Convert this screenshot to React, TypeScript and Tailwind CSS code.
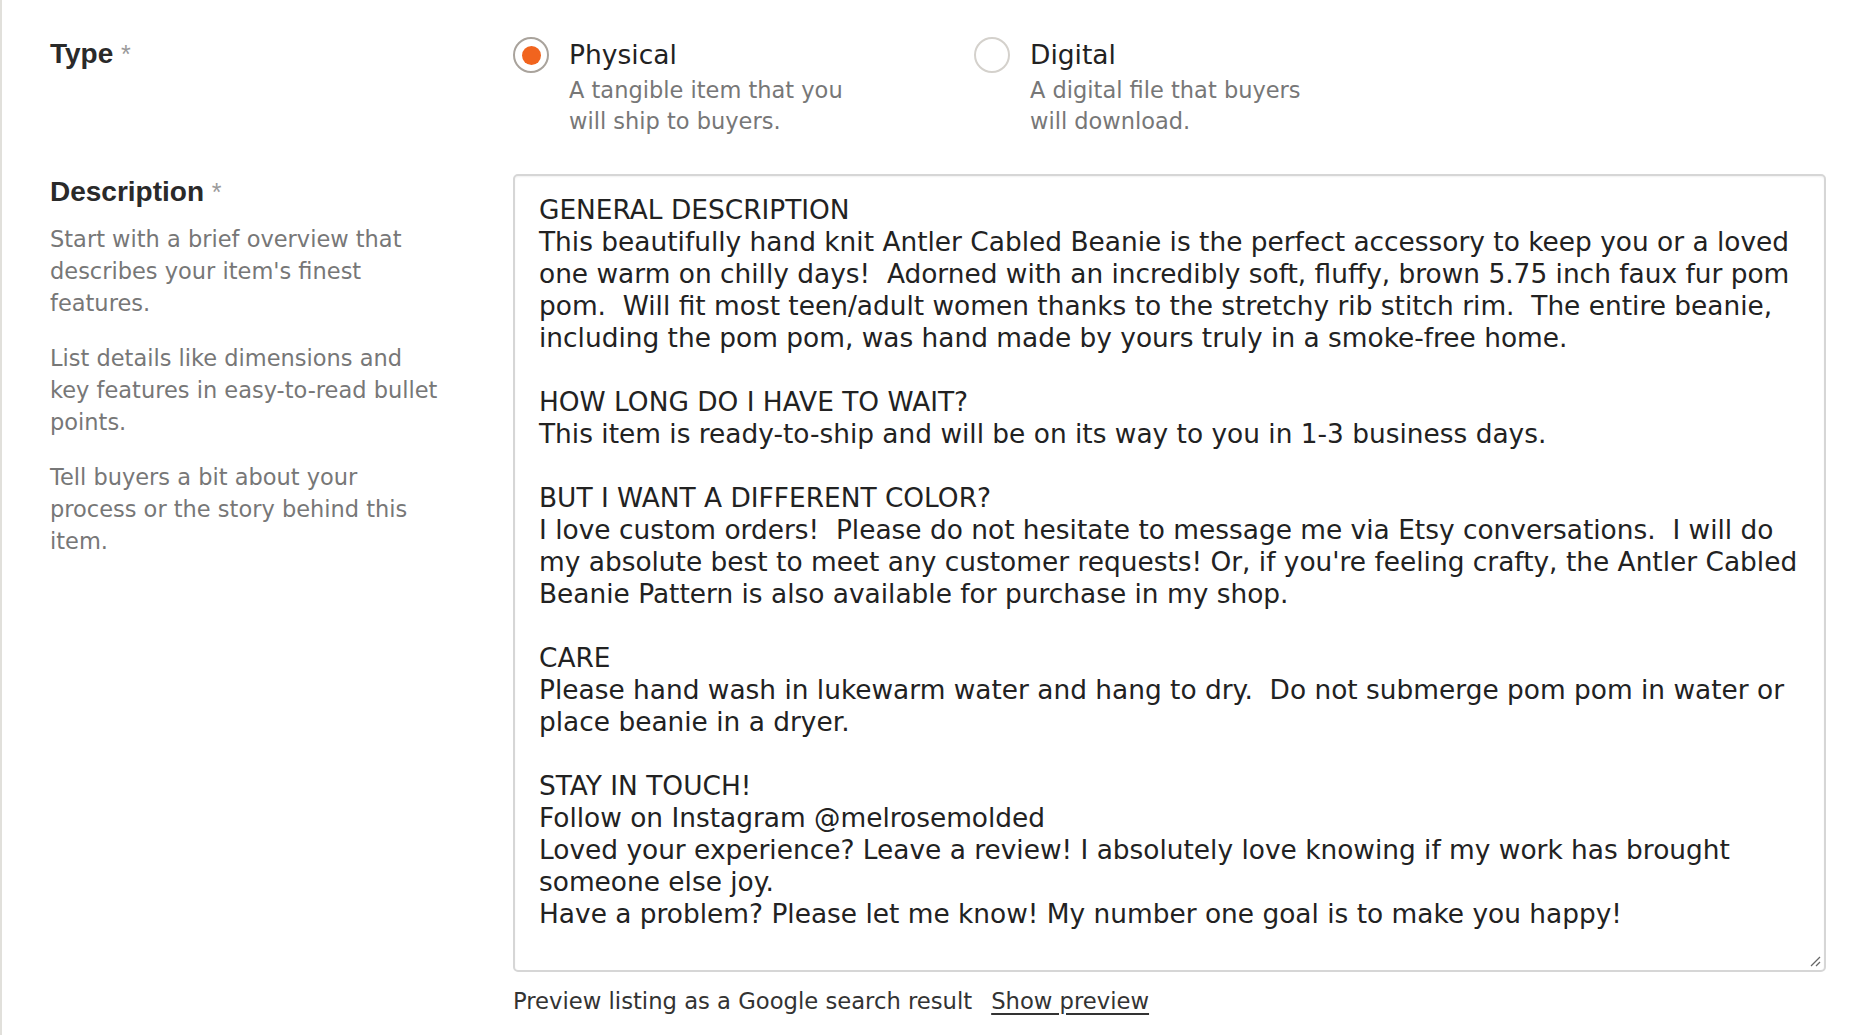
import React from 'react'

const descriptionLines = [
  'GENERAL DESCRIPTION',
  'This beautifully hand knit Antler Cabled Beanie is the perfect accessory to keep you or a loved',
  'one warm on chilly days!  Adorned with an incredibly soft, fluffy, brown 5.75 inch faux fur pom',
  'pom.  Will fit most teen/adult women thanks to the stretchy rib stitch rim.  The entire beanie,',
  'including the pom pom, was hand made by yours truly in a smoke-free home.',
  '',
  'HOW LONG DO I HAVE TO WAIT?',
  'This item is ready-to-ship and will be on its way to you in 1-3 business days.',
  '',
  'BUT I WANT A DIFFERENT COLOR?',
  'I love custom orders!  Please do not hesitate to message me via Etsy conversations.  I will do',
  "my absolute best to meet any customer requests! Or, if you're feeling crafty, the Antler Cabled",
  'Beanie Pattern is also available for purchase in my shop.',
  '',
  'CARE',
  'Please hand wash in lukewarm water and hang to dry.  Do not submerge pom pom in water or',
  'place beanie in a dryer.',
  '',
  'STAY IN TOUCH!',
  'Follow on Instagram @melrosemolded',
  'Loved your experience? Leave a review! I absolutely love knowing if my work has brought',
  'someone else joy.',
  'Have a problem? Please let me know! My number one goal is to make you happy!',
]

const body = { fontFamily: '"DejaVu Sans", "Liberation Sans", sans-serif' }
const labelFont = { fontFamily: '"Liberation Sans", Arial, sans-serif' }

function Radio({ checked, title, lines }: { checked: boolean; title: string; lines: string[] }) {
  return (
    <div className="flex gap-5">
      <div
        className={`w-9 h-9 shrink-0 rounded-full border-2 flex items-center justify-center bg-white ${
          checked ? 'border-[#a9a39c]' : 'border-[#d4d1cc]'
        }`}
      >
        {checked && <div className="w-[19px] h-[19px] rounded-full bg-[#f1641e]"></div>}
      </div>
      <div>
        <div className="text-[26.5px] leading-[36px] text-[#222222]">{title}</div>
        <div className="text-[22.5px] leading-[31px] text-[#777777] mt-[2px]">
          {lines.map((l) => (
            <div key={l}>{l}</div>
          ))}
        </div>
      </div>
    </div>
  )
}

function Label({ text }: { text: string }) {
  return (
    <div className="text-[28px] leading-[34px] font-bold text-[#2a2a2a]" style={labelFont}>
      {text} <span className="font-normal text-[#9a9a9a] text-[25px]">*</span>
    </div>
  )
}

export default function App() {
  return (
    <main className="min-h-screen bg-white border-l-2 border-[#e1e0db] pl-12" style={body}>
      {/* Type row */}
      <div className="flex h-[174px] pt-[37px]">
        <div className="w-[463px] shrink-0">
          <Label text="Type" />
        </div>
        <div className="flex">
          <div className="w-[461px]">
            <Radio checked title="Physical" lines={['A tangible item that you', 'will ship to buyers.']} />
          </div>
          <Radio checked={false} title="Digital" lines={['A digital file that buyers', 'will download.']} />
        </div>
      </div>

      {/* Description row */}
      <div className="flex">
        <div className="w-[463px] shrink-0 pt-[1px]">
          <Label text="Description" />
          <div className="mt-[14px] text-[22.5px] leading-[32px] text-[#777777] space-y-[23px]">
            <div>
              <div>Start with a brief overview that</div>
              <div>describes your item's finest</div>
              <div>features.</div>
            </div>
            <div>
              <div>List details like dimensions and</div>
              <div>key features in easy-to-read bullet</div>
              <div>points.</div>
            </div>
            <div>
              <div>Tell buyers a bit about your</div>
              <div>process or the story behind this</div>
              <div>item.</div>
            </div>
          </div>
        </div>
        <div>
          <div className="relative h-[798px] w-[1313px] rounded-[5px] border-2 border-[#d6d6d6] bg-white pl-6 pt-[18px] text-[26.4px] leading-[32px] text-[#222222] shadow-[inset_0_1px_2px_rgba(0,0,0,0.06)]">
            {descriptionLines.map((line, i) => (
              <div key={i} className="whitespace-pre">
                {line || '\u00a0'}
              </div>
            ))}
            <svg className="absolute right-[3px] bottom-[3px]" width="12" height="12" viewBox="0 0 12 12">
              <line x1="2" y1="11" x2="11" y2="2" stroke="#666" strokeWidth="1.3" />
              <line x1="7" y1="11" x2="11" y2="7" stroke="#666" strokeWidth="1.3" />
            </svg>
          </div>
          <div className="mt-[14px] text-[22.7px] leading-[30px] text-[#333333]">
            Preview listing as a Google search result
            <span className="ml-[19px] underline underline-offset-4">Show preview</span>
          </div>
        </div>
      </div>
    </main>
  )
}
